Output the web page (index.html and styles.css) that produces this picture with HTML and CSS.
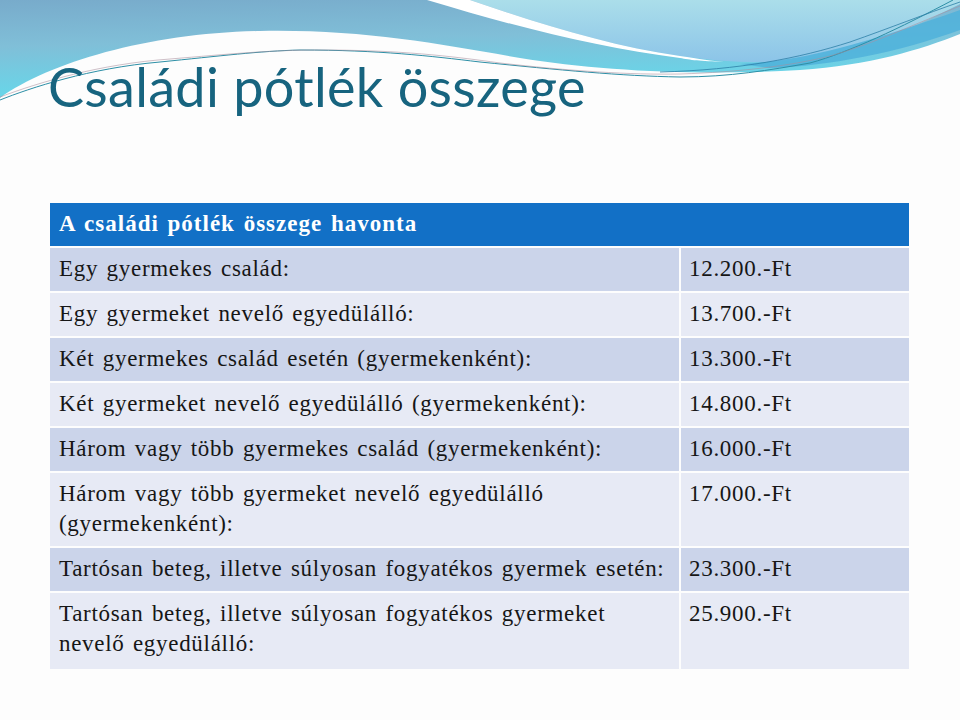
FILE: index.html
```html
<!DOCTYPE html>
<html lang="hu">
<head>
<meta charset="utf-8">
<title>Családi pótlék összege</title>
<link rel="stylesheet" href="styles.css">
</head>
<body>
<div class="slide">
  <svg class="waves" width="960" height="112" viewBox="0 0 960 112" aria-hidden="true">
    <defs>
      <linearGradient id="gA" x1="0" y1="0" x2="0.2" y2="1">
        <stop offset="0" stop-color="#78abcb"/>
        <stop offset="0.4" stop-color="#80bfd8"/>
        <stop offset="0.75" stop-color="#6cd2e6"/>
        <stop offset="1" stop-color="#5ddcec"/>
      </linearGradient>
      <linearGradient id="gB" x1="0" y1="0" x2="0" y2="1">
        <stop offset="0" stop-color="#abdeea"/>
        <stop offset="1" stop-color="#8cc4e8"/>
      </linearGradient>
    </defs>
    <rect x="0" y="0" width="960" height="112" fill="url(#gA)"/>
    <path d="M470,0 C540,24 610,46 680,56 C710,60 740,63 770,62 C830,60 890,40 960,4 L960,0 Z" fill="url(#gB)"/>
    <path d="M740,64 C800,62 870,42 960,10 L960,30 C900,52 830,66 770,68 Z" fill="#4fb2da" opacity="0.85"/>
    <path d="M427,0 L470,0 C540,24 610,46 680,56 C700,59 712,61 724,62 C700,61 690,60 680,58 C600,48 520,28 427,0 Z" fill="#ffffff"/>
    <path d="M0,98 C50,62 150,33 260,31 C360,29 440,44 520,58 C600,71 700,76 800,70 C870,65 920,50 960,34 L960,112 L0,112 Z" fill="#fdfdfd"/>
    <path d="M0,100 C30,88 90,68 160,62 C220,56 260,51 300,50 C380,50 430,56 480,62 C560,70 620,76 680,77 C730,77 770,70 810,63 C850,52 900,28 953,0" fill="none" stroke="#2d8fa6" stroke-width="1"/>
    <path d="M0,97 C40,82 100,64 170,59 C230,54 270,50 320,50 C400,50 450,56 500,63 C570,71 630,75 680,74 C740,72 790,66 830,56 C870,45 920,22 960,6" fill="none" stroke="#a88d9c" stroke-width="0.8" opacity="0.7"/>
    <path d="M660,72 C740,70 800,58 850,42 C890,28 925,14 960,2" fill="none" stroke="#2c7fa6" stroke-width="0.8"/>
  </svg>

  <h1 class="title">Családi pótlék összege</h1>

  <table class="grid">
    <thead>
      <tr><th colspan="2">A családi pótlék összege havonta</th></tr>
    </thead>
    <tbody>
      <tr class="odd"><td class="label">Egy gyermekes család:</td><td class="amount">12.200.-Ft</td></tr>
      <tr class="even"><td class="label">Egy gyermeket nevelő egyedülálló:</td><td class="amount">13.700.-Ft</td></tr>
      <tr class="odd"><td class="label">Két gyermekes család esetén (gyermekenként):</td><td class="amount">13.300.-Ft</td></tr>
      <tr class="even"><td class="label">Két gyermeket nevelő egyedülálló (gyermekenként):</td><td class="amount">14.800.-Ft</td></tr>
      <tr class="odd"><td class="label">Három vagy több gyermekes család (gyermekenként):</td><td class="amount">16.000.-Ft</td></tr>
      <tr class="even"><td class="label">Három vagy több gyermeket nevelő egyedülálló<br>(gyermekenként):</td><td class="amount">17.000.-Ft</td></tr>
      <tr class="odd"><td class="label">Tartósan beteg, illetve súlyosan fogyatékos gyermek esetén:</td><td class="amount">23.300.-Ft</td></tr>
      <tr class="even"><td class="label">Tartósan beteg, illetve súlyosan fogyatékos gyermeket<br>nevelő egyedülálló:</td><td class="amount">25.900.-Ft</td></tr>
    </tbody>
  </table>
</div>
</body>
</html>
```

FILE: styles.css
```css
html, body {
  margin: 0;
  padding: 0;
  background: #fdfdfd;
}

.slide {
  position: relative;
  width: 960px;
  height: 720px;
  overflow: hidden;
  background: #fdfdfd;
}

.waves {
  position: absolute;
  top: 0;
  left: 0;
  display: block;
}

.title {
  position: relative;
  margin: 0;
  padding: 57px 0 0 48px;
  height: 203px;
  box-sizing: border-box;
  font-family: Lato, "Open Sans", sans-serif;
  font-weight: 400;
  font-size: 54px;
  line-height: 60px;
  letter-spacing: 0.3px;
  color: #17647f;
}

.grid {
  margin-left: 48px;
  width: 863px;
  border-collapse: collapse;
  font-family: "Liberation Serif", "Times New Roman", serif;
  font-size: 23px;
  letter-spacing: 0.7px;
  word-spacing: 2px;
  color: #161616;
}

.grid th,
.grid td {
  border: 2px solid #fdfdfd;
  padding: 6px 10px 7px 9px;
  line-height: 30px;
  text-align: left;
  vertical-align: top;
}

.grid th {
  background: #1270c6;
  color: #ffffff;
  font-weight: 700;
  letter-spacing: 1px;
  border-top: 0;
}

.grid .label {
  width: 610px;
  white-space: nowrap;
}

.grid .amount {
  padding-left: 8px;
}

.grid .odd td {
  background: #cbd4ea;
}

.grid .even td {
  background: #e7eaf5;
}

.grid tbody tr:last-child td {
  padding-bottom: 10px;
}
```
